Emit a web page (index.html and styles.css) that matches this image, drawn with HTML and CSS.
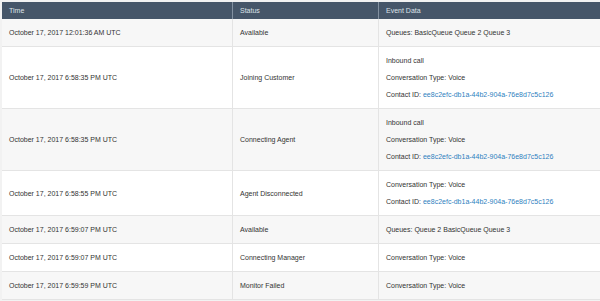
FILE: index.html
```html
<!DOCTYPE html>
<html lang="en">
<head>
    <meta charset="UTF-8">
    <meta name="viewport" content="width=device-width, initial-scale=1.0">
    <title>Agent Events</title>
    <link rel="stylesheet" href="styles.css">
</head>
<body>

    <div class="events-wrap">
        <table class="events">
            <thead>
                <tr>
                    <th class="col-time">Time</th>
                    <th class="col-status">Status</th>
                    <th>Event Data</th>
                </tr>
            </thead>
            <tbody>
                <tr>
                    <td>October 17, 2017 12:01:36 AM UTC</td>
                    <td>Available</td>
                    <td>Queues: BasicQueue Queue 2 Queue 3</td>
                </tr>
                <tr>
                    <td>October 17, 2017 6:58:35 PM UTC</td>
                    <td>Joining Customer</td>
                    <td>
                        <div>Inbound call</div>
                        <div>Conversation Type: Voice</div>
                        <div>Contact ID: <a href="#">ee8c2efc-db1a-44b2-904a-76e8d7c5c126</a></div>
                    </td>
                </tr>
                <tr>
                    <td>October 17, 2017 6:58:35 PM UTC</td>
                    <td>Connecting Agent</td>
                    <td>
                        <div>Inbound call</div>
                        <div>Conversation Type: Voice</div>
                        <div>Contact ID: <a href="#">ee8c2efc-db1a-44b2-904a-76e8d7c5c126</a></div>
                    </td>
                </tr>
                <tr>
                    <td>October 17, 2017 6:58:55 PM UTC</td>
                    <td>Agent Disconnected</td>
                    <td>
                        <div>Conversation Type: Voice</div>
                        <div>Contact ID: <a href="#">ee8c2efc-db1a-44b2-904a-76e8d7c5c126</a></div>
                    </td>
                </tr>
                <tr>
                    <td>October 17, 2017 6:59:07 PM UTC</td>
                    <td>Available</td>
                    <td>Queues: Queue 2 BasicQueue Queue 3</td>
                </tr>
                <tr>
                    <td>October 17, 2017 6:59:07 PM UTC</td>
                    <td>Connecting Manager</td>
                    <td>Conversation Type: Voice</td>
                </tr>
                <tr>
                    <td>October 17, 2017 6:59:59 PM UTC</td>
                    <td>Monitor Failed</td>
                    <td>Conversation Type: Voice</td>
                </tr>
            </tbody>
        </table>
    </div>

</body>
</html>
```

FILE: styles.css
```css
body {
    margin: 0;
    padding: 0;
    background-color: #f2f2f2;
    font-family: "Liberation Sans", Arial, sans-serif;
    font-size: 7px;
    color: #333;
}
.events-wrap {
    padding: 2px 0 0 2px;
}
.events {
    width: 100%;
    border-collapse: separate;
    border-spacing: 0;
    table-layout: fixed;
}
.events th,
.events td {
    box-sizing: border-box;
    text-align: left;
    vertical-align: middle;
    line-height: 17px;
}
.events th {
    background-color: #465669;
    color: #dde2e8;
    font-weight: normal;
    padding: 0 7px;
    height: 17px;
}
.events th + th {
    border-left: 1px solid #8391a1;
}
.events .col-time {
    width: 230px;
}
.events .col-status {
    width: 146px;
}
.events td {
    padding: 5px 7px;
    border-bottom: 1px solid #e4e4e4;
    background-color: #fff;
}
.events td + td {
    border-left: 1px solid #e4e4e4;
}
.events tbody tr:nth-child(odd) td {
    background-color: #f7f7f7;
}
.events a {
    color: #2f7fc0;
    text-decoration: none;
}
```
